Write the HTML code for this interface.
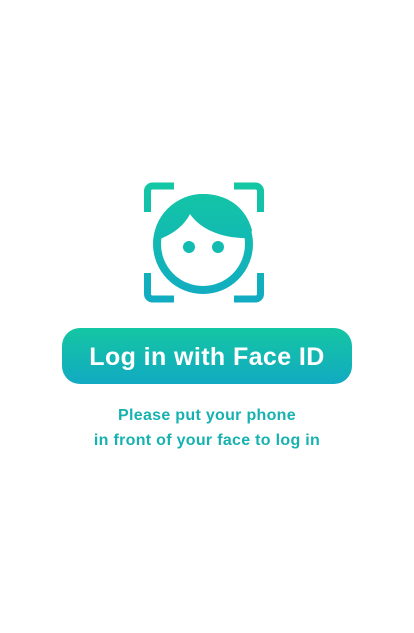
<!DOCTYPE html>
<html><head><meta charset="utf-8"><style>
html,body{margin:0;padding:0;background:#fff;width:414px;height:633px;overflow:hidden;font-family:"Liberation Sans",sans-serif}
.btn{position:absolute;left:62px;top:328px;width:290px;height:56px;border-radius:18px;background:linear-gradient(#14c6a2,#12aac2);color:#fff;font-weight:bold;font-size:25px;letter-spacing:0.4px;text-align:center;line-height:58px}
.sub{position:absolute;left:0;width:414px;top:403px;text-align:center;color:#17b2b0;font-weight:bold;font-size:16px;letter-spacing:0.3px;line-height:25px}
</style></head><body>
<svg width="414" height="633" style="position:absolute;left:0;top:0">
<defs><linearGradient id="g" x1="0" y1="183" x2="0" y2="302" gradientUnits="userSpaceOnUse"><stop offset="0" stop-color="#13c7a3"/><stop offset="1" stop-color="#12abc3"/></linearGradient></defs>
<g fill="none" stroke="url(#g)" stroke-width="7">
<path d="M147.5 212V191a5 5 0 0 1 5-5H174"/>
<path d="M234 186h21.5a5 5 0 0 1 5 5V212"/>
<path d="M147.5 273v21a5 5 0 0 0 5 5H174"/>
<path d="M234 299h21.5a5 5 0 0 0 5-5V273"/>
<circle cx="203" cy="244" r="46" stroke-width="8"/>
</g>
<path d="M157 240C172 235 184 226 190 214C200 229 222 239 250 238L252 230C245 205 225 194 203 194C180 194 160 210 157 240Z" fill="url(#g)"/>
<circle cx="189" cy="247" r="6" fill="#13bbb0"/>
<circle cx="218" cy="247" r="6" fill="#13bbb0"/>
</svg>
<div class="btn">Log in with Face ID</div>
<div class="sub">Please put your phone<br>in front of your face to log in</div>
</body></html>
